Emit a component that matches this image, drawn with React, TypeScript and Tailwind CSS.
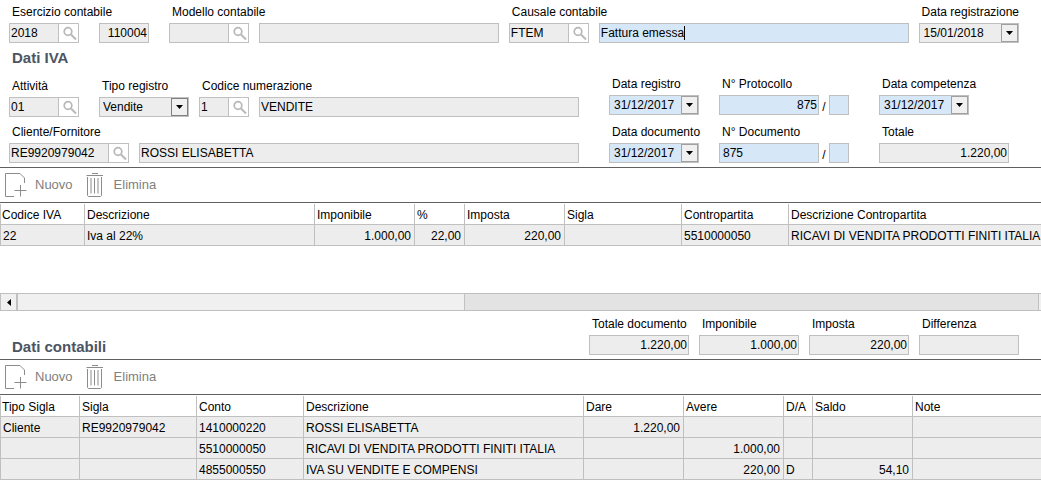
import { useState } from "react";
import type { ReactNode } from "react";

type Column = {
  title: string;
  width?: number;
  right?: boolean;
};

const ivaColumns: Column[] = [
  { title: "Codice IVA", width: 84 },
  { title: "Descrizione", width: 230 },
  { title: "Imponibile", width: 100, right: true },
  { title: "%", width: 50, right: true },
  { title: "Imposta", width: 100, right: true },
  { title: "Sigla", width: 117 },
  { title: "Contropartita", width: 107 },
  { title: "Descrizione Contropartita" },
];

const ivaRows = [
  [
    "22",
    "Iva al 22%",
    "1.000,00",
    "22,00",
    "220,00",
    "",
    "5510000050",
    "RICAVI DI VENDITA PRODOTTI FINITI ITALIA",
  ],
];

const contiColumns: Column[] = [
  { title: "Tipo Sigla", width: 79 },
  { title: "Sigla", width: 117 },
  { title: "Conto", width: 107 },
  { title: "Descrizione", width: 280 },
  { title: "Dare", width: 100, right: true },
  { title: "Avere", width: 100, right: true },
  { title: "D/A", width: 29 },
  { title: "Saldo", width: 100, right: true },
  { title: "Note" },
];

const contiRows = [
  ["Cliente", "RE9920979042", "1410000220", "ROSSI ELISABETTA", "1.220,00", "", "", "", ""],
  ["", "", "5510000050", "RICAVI DI VENDITA PRODOTTI FINITI ITALIA", "", "1.000,00", "", "", ""],
  ["", "", "4855000550", "IVA SU VENDITE E COMPENSI", "", "220,00", "D", "54,10", ""],
];

const Field: React.FC<{
  id: string;
  label: string;
  className?: string;
  children: ReactNode;
}> = ({ id, label, className = "", children }) => (
  <div className={`flex flex-col gap-[3px] ${className}`}>
    <label htmlFor={id} className="h-4 pl-[3px] leading-4 whitespace-nowrap">
      {label}
    </label>
    <div className="flex">{children}</div>
  </div>
);

const TextBox: React.FC<{
  id?: string;
  name?: string;
  value?: string;
  className?: string;
}> = ({ id, name, value = "", className = "bg-[#ededed]" }) => (
  <input
    id={id}
    aria-label={name}
    type="text"
    defaultValue={value}
    className={`h-5 min-w-0 border border-[#c0c0c0] px-px outline-0 ${className}`}
  />
);

const Lookup: React.FC<{ id: string; value?: string; className: string }> = ({
  id,
  value = "",
  className,
}) => (
  <div className={`flex h-5 shrink-0 border border-[#c0c0c0] ${className}`}>
    <input
      id={id}
      type="text"
      defaultValue={value}
      className="min-w-0 flex-1 bg-[#ededed] px-px outline-0"
    />
    <button
      type="button"
      aria-label="Cerca"
      className="w-5 shrink-0 border-l border-[#c0c0c0] bg-white"
    >
      <svg viewBox="0 0 19 18" className="h-[18px] w-[19px]" fill="none" stroke="#b8b8b8">
        <circle cx="9" cy="7.5" r="3.8" strokeWidth="1.7" />
        <path d="M12 10.5 17 15.5" strokeWidth="2" />
      </svg>
    </button>
  </div>
);

const Arrow: React.FC = () => (
  <svg viewBox="0 0 7 4" className="h-1 w-[7px]" fill="#000">
    <path d="M0 0h7L3.5 4z" />
  </svg>
);

const DateBox: React.FC<{ id: string; value: string; className: string }> = ({
  id,
  value,
  className,
}) => (
  <div className={`flex h-5 border border-[#c0c0c0] ${className}`}>
    <input
      id={id}
      type="text"
      defaultValue={value}
      className="min-w-0 flex-1 bg-transparent pl-1 outline-0"
    />
    <button
      type="button"
      aria-label="Apri calendario"
      className="flex w-[17px] shrink-0 items-center justify-center border border-[#a0a0a0] bg-[#f0f0f0]"
    >
      <Arrow />
    </button>
  </div>
);

const Toolbar: React.FC = () => (
  <div className="flex h-9 items-center border-y border-[#606060] text-[13px] text-[#808080]">
    <button type="button" className="flex items-center gap-2 pl-[5px]">
      <svg viewBox="0 0 22 24" className="h-6 w-[22px]" fill="none" stroke="#8c8c8c">
        <path d="M9 23.5H.5V.5H15L19.5 5V10" />
        <path d="M15.5 12V23.5M9.5 17.5H21.5" />
      </svg>
      Nuovo
    </button>
    <button type="button" className="flex items-center gap-[10px] pl-[13px]">
      <svg viewBox="0 0 18 24" className="h-6 w-[18px]" fill="none" stroke="#8c8c8c">
        <path d="M6 .5H12M.5 2.5H17" />
        <path d="M1.5 4V22.5L2.5 23.5H14.5L15.5 22.5V4" />
        <path d="M5 5V20.5M8.5 5V20.5M12 5V20.5" />
      </svg>
      Elimina
    </button>
  </div>
);

const Grid: React.FC<{ columns: Column[]; rows: string[][] }> = ({ columns, rows }) => (
  <div className="overflow-hidden pt-px">
    <table className="w-full table-fixed border-separate border-spacing-0">
      <colgroup>
        {columns.map(({ title, width }) => (
          <col key={title} style={{ width }} />
        ))}
      </colgroup>
      <thead>
        <tr>
          {columns.map(({ title }) => (
            <th
              key={title}
              className={
                "h-[21px] border-b border-l border-[#c0c0c0] p-0 pt-[2px] pl-[2px] " +
                "text-left font-normal whitespace-nowrap first:pl-px"
              }
            >
              {title}
            </th>
          ))}
        </tr>
      </thead>
      <tbody>
        {rows.map((row, i) => (
          <tr key={i}>
            {row.map((cell, j) => (
              <td
                key={j}
                className={
                  "h-[21px] border-b border-l border-[#c0c0c0] bg-[#ededed] p-0 pt-[2px] pl-[2px] " +
                  "whitespace-nowrap " +
                  (columns[j].right ? "pr-[3px] text-right" : "")
                }
              >
                {cell}
              </td>
            ))}
          </tr>
        ))}
      </tbody>
    </table>
  </div>
);

const ScrollBar: React.FC = () => (
  <div className="flex h-[18px] border-y border-[#c0c0c0] bg-[#e3e3e3]">
    <button
      type="button"
      aria-label="Scorri a sinistra"
      className="flex w-[17px] items-center justify-center border-x border-[#c0c0c0] bg-[#f0f0f0]"
    >
      <svg viewBox="0 0 4 7" className="h-[7px] w-1" fill="#000">
        <path d="M4 0v7L0 3.5z" />
      </svg>
    </button>
    <div className="w-[43%] border-x border-[#c0c0c0] bg-[#f0f0f0]" />
    <div className="ml-auto w-[3px] border-l border-[#c0c0c0] bg-[#f0f0f0]" />
  </div>
);

const App: React.FC = () => {
  const [registro, setRegistro] = useState("Vendite");

  return (
    <main className="min-h-screen bg-white font-['Liberation_Sans',Arial,sans-serif] text-[12px] leading-4 text-black">
      <form className="pt-1 pr-[22px] pb-1 pl-[9px]">
        <div className="flex">
          <Field id="esercizio" label="Esercizio contabile">
            <Lookup id="esercizio" value="2018" className="mr-5 w-[70px]" />
            <TextBox
              name="Numero registrazione"
              value="110004"
              className="w-[50px] bg-[#ededed] text-right"
            />
          </Field>
          <Field id="modello" label="Modello contabile" className="ml-5 min-w-0 flex-[33_1_0%]">
            <Lookup id="modello" className="mr-[10px] w-20" />
            <TextBox name="Descrizione modello" className="flex-1 bg-[#ededed]" />
          </Field>
          <Field
            id="causale"
            label="Causale contabile"
            className="ml-[10px] min-w-0 flex-[40_1_0%]"
          >
            <Lookup id="causale" value="FTEM" className="mr-[10px] w-20" />
            <div className="flex h-5 min-w-0 flex-1 items-center border border-[#c0c0c0] bg-[#d6e8f8]">
              <input
                type="text"
                aria-label="Descrizione causale"
                defaultValue="Fattura emessa"
                className="field-sizing-content pl-px outline-0"
              />
              <span className="h-[14px] w-px bg-black" />
            </div>
          </Field>
          <Field id="data-registrazione" label="Data registrazione" className="ml-[10px]">
            <DateBox id="data-registrazione" value="15/01/2018" className="w-[100px] bg-[#ededed]" />
          </Field>
        </div>

        <h2 className="pt-[5px] pb-2 pl-[3px] text-[15px] leading-5 font-bold text-[#4b5563]">
          Dati IVA
        </h2>

        <div className="flex gap-[30px]">
          <div className="flex min-w-0 flex-1 flex-col justify-between pt-[2px]">
            <div className="flex">
              <Field id="attivita" label="Attività" className="mr-5">
                <Lookup id="attivita" value="01" className="w-[70px]" />
              </Field>
              <Field id="tipo-registro" label="Tipo registro" className="mr-[10px]">
                <div className="relative w-[90px]">
                  <select
                    id="tipo-registro"
                    value={registro}
                    onChange={(e) => setRegistro(e.target.value)}
                    className="h-5 w-full appearance-none border border-[#c0c0c0] bg-[#ededed] pl-[3px] outline-0"
                  >
                    <option>Vendite</option>
                    <option>Acquisti</option>
                  </select>
                  <span
                    className={
                      "pointer-events-none absolute inset-y-px right-px flex w-[17px] " +
                      "items-center justify-center border border-[#808080] bg-[#f0f0f0]"
                    }
                  >
                    <Arrow />
                  </span>
                </div>
              </Field>
              <Field id="numerazione" label="Codice numerazione" className="min-w-0 flex-1">
                <Lookup id="numerazione" value="1" className="mr-[10px] w-[50px]" />
                <TextBox
                  name="Descrizione numerazione"
                  value="VENDITE"
                  className="flex-1 bg-[#ededed]"
                />
              </Field>
            </div>
            <Field id="cliente" label="Cliente/Fornitore">
              <Lookup id="cliente" value="RE9920979042" className="mr-[10px] w-[120px]" />
              <TextBox
                name="Ragione sociale"
                value="ROSSI ELISABETTA"
                className="flex-1 bg-[#ededed]"
              />
            </Field>
          </div>

          <div className="grid w-[410px] grid-cols-[90px_130px_140px] gap-x-5 gap-y-[9px]">
            <Field id="data-registro" label="Data registro">
              <DateBox id="data-registro" value="31/12/2017" className="w-[90px] bg-[#d6e8f8]" />
            </Field>
            <Field id="protocollo" label="N° Protocollo">
              <TextBox id="protocollo" value="875" className="w-[100px] bg-[#d6e8f8] text-right" />
              <span className="w-[10px] pt-1 text-center">/</span>
              <TextBox name="Suffisso protocollo" className="w-5 bg-[#d6e8f8]" />
            </Field>
            <Field id="data-competenza" label="Data competenza" className="ml-[10px]">
              <DateBox id="data-competenza" value="31/12/2017" className="w-[90px] bg-[#d6e8f8]" />
            </Field>
            <Field id="data-documento" label="Data documento">
              <DateBox id="data-documento" value="31/12/2017" className="w-[90px] bg-[#d6e8f8]" />
            </Field>
            <Field id="documento" label="N° Documento">
              <TextBox id="documento" value="875" className="w-[100px] bg-[#d6e8f8] pl-[3px]" />
              <span className="w-[10px] pt-1 text-center">/</span>
              <TextBox name="Suffisso documento" className="w-5 bg-[#d6e8f8]" />
            </Field>
            <Field id="totale" label="Totale" className="ml-[10px]">
              <TextBox id="totale" value="1.220,00" className="w-[130px] bg-[#ededed] text-right" />
            </Field>
          </div>
        </div>
      </form>

      <section>
        <Toolbar />
        <Grid columns={ivaColumns} rows={ivaRows} />
        <div className="h-[47px]" />
        <ScrollBar />
      </section>

      <section>
        <div className="flex items-end justify-between pt-[5px] pr-[22px] pb-1 pl-3">
          <h2 className="text-[15px] leading-4 font-bold text-[#4b5563]">Dati contabili</h2>
          <div className="flex gap-[10px]">
            <Field id="totale-documento" label="Totale documento" className="w-[100px]">
              <TextBox
                id="totale-documento"
                value="1.220,00"
                className="w-full bg-[#ededed] text-right"
              />
            </Field>
            <Field id="imponibile" label="Imponibile" className="w-[100px]">
              <TextBox id="imponibile" value="1.000,00" className="w-full bg-[#ededed] text-right" />
            </Field>
            <Field id="imposta" label="Imposta" className="w-[100px]">
              <TextBox id="imposta" value="220,00" className="w-full bg-[#ededed] text-right" />
            </Field>
            <Field id="differenza" label="Differenza" className="w-[100px]">
              <TextBox id="differenza" className="w-full bg-[#ededed] text-right" />
            </Field>
          </div>
        </div>
        <Toolbar />
        <Grid columns={contiColumns} rows={contiRows} />
      </section>
    </main>
  );
};

export default App;
